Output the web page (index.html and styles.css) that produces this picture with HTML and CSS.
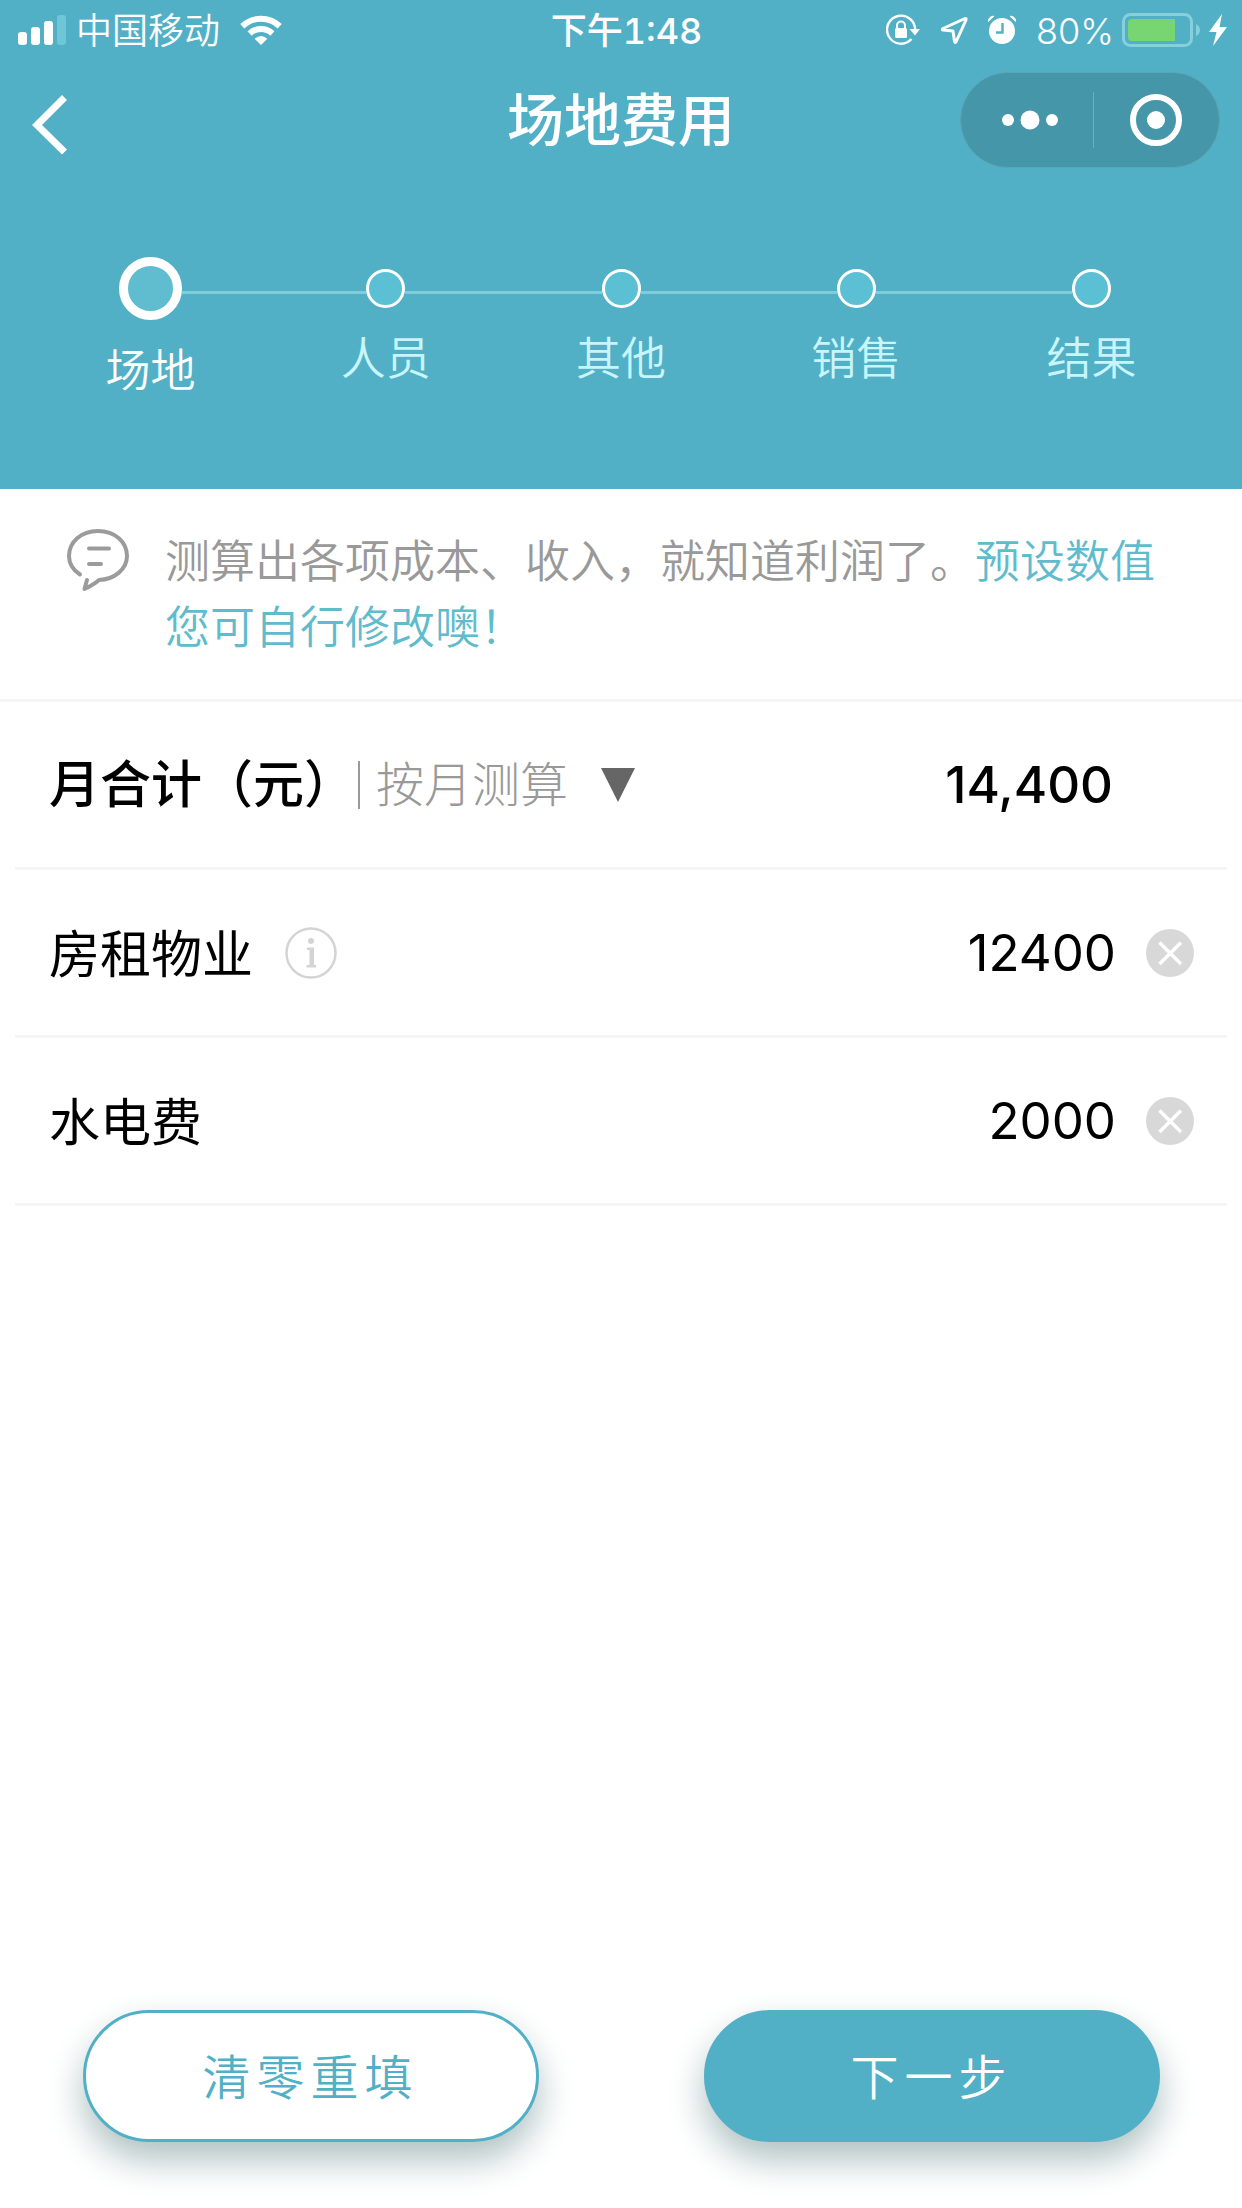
FILE: index.html
```html
<!DOCTYPE html>
<html lang="zh-CN">
<head>
<meta charset="utf-8">
<meta name="viewport" content="width=device-width, initial-scale=1">
<title>场地费用</title>
<link rel="stylesheet" href="styles.css">
</head>
<body>
<div class="page">
  <header class="header">
    <div class="status">
      <div class="status-side">
        <svg class="signal" width="48" height="30" viewBox="0 0 48 30" fill="#fff" aria-hidden="true">
          <rect x="0" y="17" width="9" height="13" rx="3"/>
          <rect x="13" y="12" width="9" height="18" rx="3"/>
          <rect x="26" y="6" width="9" height="24" rx="3"/>
          <rect x="39" y="0" width="9" height="30" rx="3" fill="#6fc6d6"/>
        </svg>
        <span class="carrier">中国移动</span>
        <svg class="wifi" width="42" height="30" viewBox="0 0 42 30" aria-hidden="true">
          <g fill="none" stroke="#fff" stroke-width="6">
            <path d="M2.3 11.2A27.5 27.5 0 0 1 39.7 11.2"/>
            <path d="M9.6 18.5A16.4 16.4 0 0 1 32.4 18.5"/>
          </g>
          <path d="M21 30L14.6 23.8Q21 18 27.4 23.8Z" fill="#fff"/>
        </svg>
      </div>
      <time class="clock">下午1:48</time>
      <div class="status-side status-right">
        <svg width="34" height="32" viewBox="0 0 34 32" aria-hidden="true">
          <path d="M29 17A14 14 0 1 0 25.5 25" fill="none" stroke="#fff" stroke-width="2.4"/>
          <path d="M23.500 15H34L29 21.500Z" fill="#fff"/>
          <rect x="9" y="14" width="12" height="10" rx="1.500" fill="#fff"/>
          <path d="M11 15V11.500a4 4 0 0 1 8 0V15" fill="none" stroke="#fff" stroke-width="2"/>
        </svg>
        <svg class="gap-l" width="28" height="30" viewBox="0 0 28 30" aria-hidden="true">
          <path d="M25 3.500L3 13.500Q1.500 14.500 3 15L13 16 14.500 26.500Q15.200 28.500 16.200 26.500L26 5Q26.500 3 25 3.500Z" fill="none" stroke="#fff" stroke-width="3" stroke-linejoin="round"/>
        </svg>
        <svg class="gap-l" width="28" height="30" viewBox="0 0 28 30" aria-hidden="true">
          <circle cx="14" cy="16" r="13" fill="#fff"/>
          <path d="M0 6.500Q1 1 6 1.200ZM28 6.500Q27 1 22 1.200Z" fill="#fff" stroke="#fff" stroke-linejoin="round"/>
          <path d="M14.500 8V17.500H8" fill="none" stroke="#52b0c6" stroke-width="2.400"/>
        </svg>
        <span class="percent">80%</span>
        <svg class="battery" width="80" height="34" viewBox="0 0 80 34" aria-hidden="true">
          <rect x="1.500" y="1.500" width="68" height="31" rx="7" fill="none" stroke="#86cfdb" stroke-width="3"/>
          <path d="M53 6V28H10Q6 28 6 24V10Q6 6 10 6Z" fill="#77d672"/>
          <path d="M74 11Q78 13 78 17T74 23Z" fill="#86cfdb"/>
        </svg>
        <svg class="bolt" width="18" height="32" viewBox="0 0 18 32" aria-hidden="true">
          <path d="M13 0L0 18H7.500L4 32 18 13H10.500Z" fill="#fff"/>
        </svg>
      </div>
    </div>

    <div class="nav">
      <div class="nav-side">
        <button class="icon-button back" type="button" aria-label="返回">
          <svg width="36" height="60" viewBox="0 0 36 60" aria-hidden="true"><path d="M32.500 2.500L5 30L32.500 57" fill="none" stroke="#fff" stroke-width="7"/></svg>
        </button>
      </div>
      <h1 class="title">场地费用</h1>
      <div class="nav-side nav-right">
        <div class="capsule">
          <button class="icon-button capsule-button capsule-more" type="button" aria-label="更多">
            <svg width="56" height="20" viewBox="0 0 56 20" fill="#fff" aria-hidden="true"><circle cx="6" cy="10" r="6"/><circle cx="28" cy="10" r="9.500"/><circle cx="50" cy="10" r="6"/></svg>
          </button>
          <span class="capsule-divider"></span>
          <button class="icon-button capsule-button" type="button" aria-label="关闭">
            <svg width="52" height="52" viewBox="0 0 52 52" aria-hidden="true"><circle cx="26" cy="26" r="23" fill="none" stroke="#fff" stroke-width="6"/><circle cx="26" cy="26" r="9" fill="#fff"/></svg>
          </button>
        </div>
      </div>
    </div>

    <ol class="steps">
      <li class="step step-current" aria-current="step"><span class="track"><span class="dot"></span></span><span class="step-name">场地</span></li>
      <li class="step"><span class="track"><span class="dot"></span></span><span class="step-name">人员</span></li>
      <li class="step"><span class="track"><span class="dot"></span></span><span class="step-name">其他</span></li>
      <li class="step"><span class="track"><span class="dot"></span></span><span class="step-name">销售</span></li>
      <li class="step"><span class="track"><span class="dot"></span></span><span class="step-name">结果</span></li>
    </ol>
  </header>

  <main class="main">
    <section class="tip">
      <svg class="tip-icon" width="62" height="63" viewBox="0 0 62 63" fill="none" stroke="#9b9b9b" stroke-width="4" stroke-linecap="round" stroke-linejoin="round" aria-hidden="true">
        <path d="M13 45.500C6 41 2 34.500 2 27C2 13 14 2 31 2S60 13 60 27C60 40.500 47 50.500 32 51Q27 55.500 17.500 60L20 51"/>
        <path d="M22 19.500H42M22 35H34"/>
      </svg>
      <p class="tip-text">测算出各项成本、收入，就知道利润了。<em class="tip-accent">预设数值您可自行修改噢！</em></p>
    </section>

    <form class="costs" id="costs">
      <div class="row row-total">
        <h2 class="total-label">月合计（元）</h2>
        <span class="separator"></span>
        <label class="period">
          <select class="period-select" aria-label="测算周期"><option>按月测算</option></select>
          <svg width="34" height="34" viewBox="0 0 34 34" aria-hidden="true"><path d="M0 0H34L17 34Z" fill="#666"/></svg>
        </label>
        <output class="total-value" for="rent utilities">14,400</output>
      </div>
      <div class="row">
        <label class="row-label" for="rent">房租物业</label>
        <button class="icon-button info" type="button" aria-label="说明">
          <svg width="52" height="52" viewBox="0 0 52 52" aria-hidden="true"><circle cx="26" cy="26" r="24.500" fill="none" stroke="#d4d4d4" stroke-width="2.500"/><circle cx="26" cy="14" r="3" fill="#d4d4d4"/><path d="M22 20.500H29V38H31V40.500H21.500V38H24.500V23H22Z" fill="#d4d4d4"/></svg>
        </button>
        <input class="amount" id="rent" type="text" inputmode="numeric" value="12400">
        <button class="icon-button" type="button" aria-label="清除房租物业">
          <svg width="48" height="48" viewBox="0 0 48 48" aria-hidden="true"><circle cx="24" cy="24" r="24" fill="#d8d8d8"/><path d="M13.500 13.500L35 35M35 13.500L13.500 35" stroke="#fff" stroke-width="3.500"/></svg>
        </button>
      </div>
      <div class="row">
        <label class="row-label" for="utilities">水电费</label>
        <input class="amount" id="utilities" type="text" inputmode="numeric" value="2000">
        <button class="icon-button" type="button" aria-label="清除水电费">
          <svg width="48" height="48" viewBox="0 0 48 48" aria-hidden="true"><circle cx="24" cy="24" r="24" fill="#d8d8d8"/><path d="M13.500 13.500L35 35M35 13.500L13.500 35" stroke="#fff" stroke-width="3.500"/></svg>
        </button>
      </div>
    </form>
  </main>

  <footer class="actions">
    <button class="action action-outline" type="reset" form="costs">清零重填</button>
    <button class="action action-primary" type="submit" form="costs">下一步</button>
  </footer>
</div>
</body>
</html>
```
FILE: styles.css
```css
:root {
  --teal: #52b0c6;
  --aqua: #60bbcd;
  --line: #f5f5f5;
  --grey: #999;
}

* {
  box-sizing: border-box;
}

body {
  margin: 0;
  background: #fff;
  color: #000;
  font-family: Inter, "Noto Sans CJK SC", sans-serif;
}

h1,
h2,
p,
ol {
  margin: 0;
  padding: 0;
}

svg {
  display: block;
  flex: none;
}

button,
input,
select {
  margin: 0;
  padding: 0;
  border: 0;
  background: none;
  color: inherit;
  font: inherit;
}

.icon-button {
  display: flex;
  flex: none;
  align-items: center;
  justify-content: center;
}

.page {
  display: flex;
  flex-direction: column;
  min-height: 100vh;
}

/* Header */
.header {
  padding-bottom: 85px;
  background: var(--teal);
  color: #fff;
}

.status {
  display: flex;
  align-items: center;
  height: 60px;
  padding: 0 15px 0 18px;
  font-size: 36px;
  line-height: 60px;
}

.status-side {
  display: flex;
  flex: 1;
  align-items: center;
}

.status-right {
  justify-content: flex-end;
}

.carrier {
  margin: 0 20px 0 10px;
  padding-top: 2px;
  font-weight: 350;
}

.clock {
  padding: 2px 0 0 8px;
  font-variant-numeric: tabular-nums;
  font-weight: 500;
}

.gap-l {
  margin-left: 20px;
}

.percent {
  margin: 0 8px 0 20px;
  padding-top: 2px;
  font-weight: 300;
}

.bolt {
  margin-left: 7px;
}

.nav {
  display: flex;
  align-items: center;
  height: 120px;
  padding: 0 22px 0 22px;
}

.nav-side {
  display: flex;
  flex: 1;
}

.nav-right {
  justify-content: flex-end;
}

.back {
  padding: 10px 0 0 10px;
}

.title {
  padding-top: 2px;
  font-size: 57px;
  font-weight: 500;
  line-height: 80px;
}

.capsule {
  display: flex;
  align-items: center;
  width: 260px;
  height: 96px;
  border: 1px solid #5ba6b5;
  border-radius: 48px;
  background: #4496a8;
}

.capsule-button {
  flex: 1;
  height: 100%;
}

.capsule-more {
  padding-left: 6px;
}

.capsule-divider {
  width: 1px;
  height: 56px;
  background: #6cb0be;
}

.steps {
  display: flex;
  padding: 77px 33px 0;
  list-style: none;
}

.step {
  display: flex;
  flex: 1;
  flex-direction: column;
  color: #c8f5fb;
  font-size: 45px;
  font-weight: 350;
  line-height: 66px;
  text-align: center;
}

.track {
  display: flex;
  align-items: center;
  height: 63px;
}

.track::before,
.track::after {
  flex: 1;
  height: 3px;
  margin-top: 8px;
  background: #7dcddb;
  content: "";
}

.step:first-child .track::before,
.step:last-child .track::after {
  background: none;
}

.dot {
  width: 39px;
  height: 39px;
  border: 3px solid #fff;
  border-radius: 50%;
  background: #5bc0d3;
}

.step-name {
  margin-top: 6px;
}

.step-current {
  color: #fff;
}

.step-current .dot {
  width: 63px;
  height: 63px;
  border-width: 9px;
  background: #60bdd0;
}

.step-current .step-name {
  margin-top: 18px;
}

/* Hint */
.tip {
  display: flex;
  align-items: flex-start;
  gap: 36px;
  padding: 40px 80px 38px 67px;
  border-bottom: 3px solid var(--line);
}

.tip-text {
  flex: 1;
  color: var(--grey);
  font-size: 45px;
  font-weight: 350;
  line-height: 66px;
}

.tip-accent {
  color: var(--aqua);
  font-style: normal;
}

/* Cost rows */
.row {
  display: flex;
  align-items: center;
  height: 168px;
  margin: 0 15px;
  padding: 0 33px 0 34px;
  border-bottom: 3px solid var(--line);
  font-size: 51px;
  line-height: 72px;
}

.total-label {
  font-size: 51px;
  font-weight: 500;
}

.separator {
  width: 2px;
  height: 48px;
  margin-left: 3px;
  background: var(--grey);
}

.period {
  display: flex;
  align-items: center;
  gap: 32px;
  margin-left: 16px;
}

.period-select {
  appearance: none;
  color: var(--grey);
  font-size: 48px;
  font-weight: 300;
  line-height: 72px;
}

.total-value {
  margin-left: auto;
  padding-right: 81px;
  font-weight: 500;
}

.row-label {
  padding-top: 4px;
}

.info {
  margin-left: 32px;
}

.amount {
  flex: 1;
  min-width: 0;
  margin-right: 30px;
  text-align: right;
}

/* Bottom actions */
.actions {
  display: flex;
  justify-content: space-around;
  margin-top: auto;
  padding: 60px 0 66px;
}

.action {
  width: 456px;
  height: 132px;
  padding-bottom: 4px;
  border: 3px solid var(--teal);
  border-radius: 66px;
  box-shadow: 0 18px 36px #afc1c2;
  font-size: 48px;
  font-weight: 350;
  letter-spacing: 6px;
}

.action-outline {
  background: #fff;
  color: var(--teal);
}

.action-primary {
  background: var(--teal);
  color: #fff;
}
```
